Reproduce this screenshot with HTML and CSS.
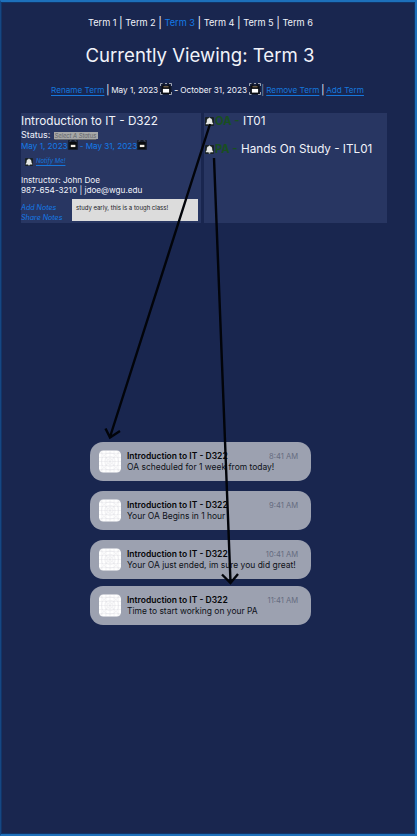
FILE: index.html
```html
<!DOCTYPE html>
<html lang="en">
<head>
<meta charset="utf-8">
<title>Currently Viewing: Term 3</title>
<link rel="stylesheet" href="styles.css">
</head>
<body>
<svg class="symbols" aria-hidden="true">
  <symbol id="calendar" viewBox="0 0 12 12">
    <rect width="12" height="12" fill="#17203c"/>
    <path d="M.5 3V.5h2M5 .5h2M9 .5h2.500v2.500M.5 9v2.500h2M9 11.500h2.500V9" fill="none" stroke="#d9dde5" stroke-width=".7"/>
    <path d="M1.500 3h1V1.500h2V3h3V1.500h2V3h1v8h-9z" fill="#0b0d12"/>
    <path d="M3.500 3.800h5" stroke="#b99b69" stroke-width=".8"/>
    <rect x="2.900" y="5.900" width="6.200" height="3.700" fill="#fff"/>
  </symbol>
  <symbol id="calendar-small" viewBox="0 0 10 10">
    <rect width="10" height="10" rx="1" fill="#151d2e"/>
    <path d="M2 2V.6h1.500M6.500.6H8V2" fill="none" stroke="#535963" stroke-width=".7"/>
    <path d="M1.500 2h7v7h-7z" fill="#090b0d"/>
    <rect x="2.800" y="4.800" width="4.600" height="2.300" fill="#f4f0e6"/>
  </symbol>
  <symbol id="bell" viewBox="0 0 9 9">
    <rect width="9" height="9" rx="1" fill="#182126"/>
    <path d="M4.500.6c.5 0 .7.3.7.7 1.500.3 2 1.400 2 2.700 0 1.300.3 1.900 1 2.500v.7H.8v-.7c.7-.6 1-1.200 1-2.500 0-1.300.5-2.400 2-2.700 0-.4.2-.7.700-.7zM3.500 7.400h2c0 .7-.4 1-1 1s-1-.3-1-1z" fill="#e5e7e4"/>
  </symbol>
  <symbol id="app-grid" viewBox="0 0 23 23">
    <rect width="23" height="23" rx="4.500" fill="#fff"/>
    <g fill="none" stroke="#d6d6da" stroke-width=".3">
      <path d="M3 0v23M7.300 0v23M11.500 0v23M15.700 0v23M20 0v23M0 3h23M0 7.300h23M0 11.500h23M0 15.700h23M0 20h23M1 1l21 21M22 1L1 22"/>
      <circle cx="11.500" cy="11.500" r="9"/><circle cx="11.500" cy="11.500" r="5.500"/><circle cx="11.500" cy="11.500" r="3"/>
    </g>
  </symbol>
</svg>
<main class="screen">
  <nav class="terms"><span>Term 1</span><i>|</i><span>Term 2</span><i>|</i><span class="current">Term 3</span><i>|</i><span>Term 4</span><i>|</i><span>Term 5</span><i>|</i><span>Term 6</span></nav>
  <h1>Currently Viewing: Term 3</h1>
  <div class="toolbar">
    <a>Rename Term</a><span>|</span><span class="dated">May 1, 2023<svg><use href="#calendar"/></svg></span><span>-</span><span class="dated">October 31, 2023<svg><use href="#calendar"/></svg><b>|</b></span><a>Remove Term</a><span>|</span><a>Add Term</a>
  </div>
  <div class="cards">
    <section class="course">
      <h2>Introduction to IT - D322</h2>
      <div class="status">Status: <span>Select A Status</span></div>
      <div class="dates"><span>May 1, 2023</span><svg><use href="#calendar-small"/></svg><span class="end">- May 31, 2023</span><svg><use href="#calendar-small"/></svg></div>
      <div class="notify"><svg><use href="#bell"/></svg><a>Notify Me!</a></div>
      <div class="contact"><div class="teacher">Instructor: John Doe</div><div>987-654-3210 | jdoe@wgu.edu</div></div>
      <div class="notes"><div class="note-links"><div>Add Notes</div><div>Share Notes</div></div><div class="note">study early, this is a tough class!</div></div>
    </section>
    <section class="tests">
      <div class="test"><svg><use href="#bell"/></svg><b>OA -</b><span>IT01</span></div>
      <div class="test lab"><svg><use href="#bell"/></svg><b>PA -</b><span>Hands On Study - ITL01</span></div>
    </section>
  </div>
  <div class="alerts">
    <article class="alert"><svg><use href="#app-grid"/></svg><div class="message"><div class="head"><strong>Introduction to IT - D322</strong><time>8:41 AM</time></div><p>OA scheduled for 1 week from today!</p></div></article>
    <article class="alert"><svg><use href="#app-grid"/></svg><div class="message"><div class="head"><strong>Introduction to IT - D322</strong><time>9:41 AM</time></div><p>Your OA Begins in 1 hour</p></div></article>
    <article class="alert"><svg><use href="#app-grid"/></svg><div class="message"><div class="head"><strong>Introduction to IT - D322</strong><time>10:41 AM</time></div><p>Your OA just ended, im sure you did great!</p></div></article>
    <article class="alert last"><svg><use href="#app-grid"/></svg><div class="message"><div class="head"><strong>Introduction to IT - D322</strong><time>11:41 AM</time></div><p>Time to start working on your PA</p></div></article>
  </div>
  <svg class="arrows" viewBox="0 0 417 836">
    <path d="M210 124L110 437M105.500 428.500l4.500 9 10-6.500M214 158l16.500 424M222 574.500l8.500 8.500 7.500-9"/>
  </svg>
</main>
</body>
</html>
```

FILE: styles.css
```css
* { box-sizing: border-box; }
body { margin: 0; background: #19264f; font-family: Inter, "Liberation Sans", sans-serif; color: #f1f3fa; }
h1, h2, p { margin: 0; font-weight: 400; }
.symbols { position: absolute; width: 0; height: 0; }
.screen { position: relative; width: 417px; height: 836px; overflow: hidden; border: solid #1d70bb; border-width: 2px 2px 2px 1px; border-left-color: #154783; box-shadow: inset 0 0 0 1px #123467; white-space: nowrap; }
.screen::before { content: ""; position: absolute; inset: -2px 0 auto -1px; height: 1px; background: #104680; }
.terms { display: flex; justify-content: space-between; width: 225px; height: 14px; margin: 14px 0 0 87px; font-size: 9.200px; line-height: 14px; }
.terms i { font-style: normal; font-size: 11px; }
.current { color: #147be8; }
h1 { width: 230px; margin: 13px 0 0 84.500px; height: 24px; font-size: 18.600px; line-height: 24px; }
.toolbar { display: flex; justify-content: space-between; width: 313px; height: 14px; margin: 16px 0 0 50px; font-size: 8.200px; line-height: 14px; }
.toolbar > span:not(.dated) { font-size: 9.500px; }
a { color: #1677dc; text-decoration: underline; text-underline-offset: 1.500px; }
.dated { display: flex; }
.dated svg { width: 12px; height: 12px; margin: 0 0 0 2px; }
.dated b { font-size: 10px; font-weight: 400; color: #858da8; }
.cards { display: flex; gap: 3px; margin: 16px 0 0 20px; }
.course, .tests { height: 110px; background: #283662; }
.course { width: 180px; }
.tests { width: 183px; padding-top: 1px; }
h2 { height: 16px; padding-top: 1px; font-size: 11.750px; line-height: 15px; }
.status { display: flex; align-items: center; height: 12px; font-size: 9px; line-height: 12px; }
.status span { width: 44px; height: 7px; margin: 1px 0 0 4px; background: #a6a7a7; color: #626569; font-size: 5.800px; font-style: italic; line-height: 7px; text-decoration: underline; }
.dates { display: flex; height: 10px; color: #147be8; font-size: 8.150px; line-height: 10px; }
.dates svg { flex: none; width: 10px; height: 10px; margin-top: -1px; }
.end { margin-left: 2px; }
.notify { display: flex; height: 10px; margin: 6px 0 0 4px; }
.notify svg { width: 8px; height: 10px; }
.notify a { margin-left: 3px; font-size: 6px; line-height: 8px; font-style: italic; }
.contact { margin-top: 8px; font-size: 8.200px; line-height: 10px; }
.notes { display: flex; margin-top: 4px; }
.note-links { width: 51px; padding-top: 4px; color: #147be8; font-size: 7.100px; font-style: italic; line-height: 10px; }
.note { width: 126px; height: 22px; padding: 4px; background: #dcdcdc; color: #17191d; font-size: 6px; line-height: 9px; }
.test { display: flex; align-items: center; height: 15px; padding-left: 1px; font-size: 11.700px; line-height: 15px; }
.test svg { flex: none; width: 9px; height: 9px; }
.test b { width: 29px; padding-left: 1px; color: #194f20; font-size: 11.200px; }
.lab { margin-top: 13px; }
.lab b { width: 27px; }
.alerts { display: grid; grid-template-rows: 39px 39px 39px 39px; row-gap: 10px; width: 221px; margin: 219px 0 0 89px; }
.alert { display: flex; height: 39px; padding: 8px 13px 0 9px; border-radius: 13px; background: #9ca1b0; color: #0e1118; }
.alert > svg { flex: none; width: 22px; height: 23px; }
.last { margin-top: -3px; }
.message { flex: 1; margin-left: 6px; }
.head { display: flex; justify-content: space-between; height: 12px; font-size: 8.500px; line-height: 12px; }
.head strong { font-weight: 600; color: #050608; }
time { color: #666c80; font-size: 7.600px; line-height: 13px; }
.message p { font-size: 8.470px; line-height: 11px; }
.arrows { position: absolute; top: -2px; left: -1px; width: 417px; height: 836px; fill: none; stroke: #02040a; stroke-width: 2.400; }
```
